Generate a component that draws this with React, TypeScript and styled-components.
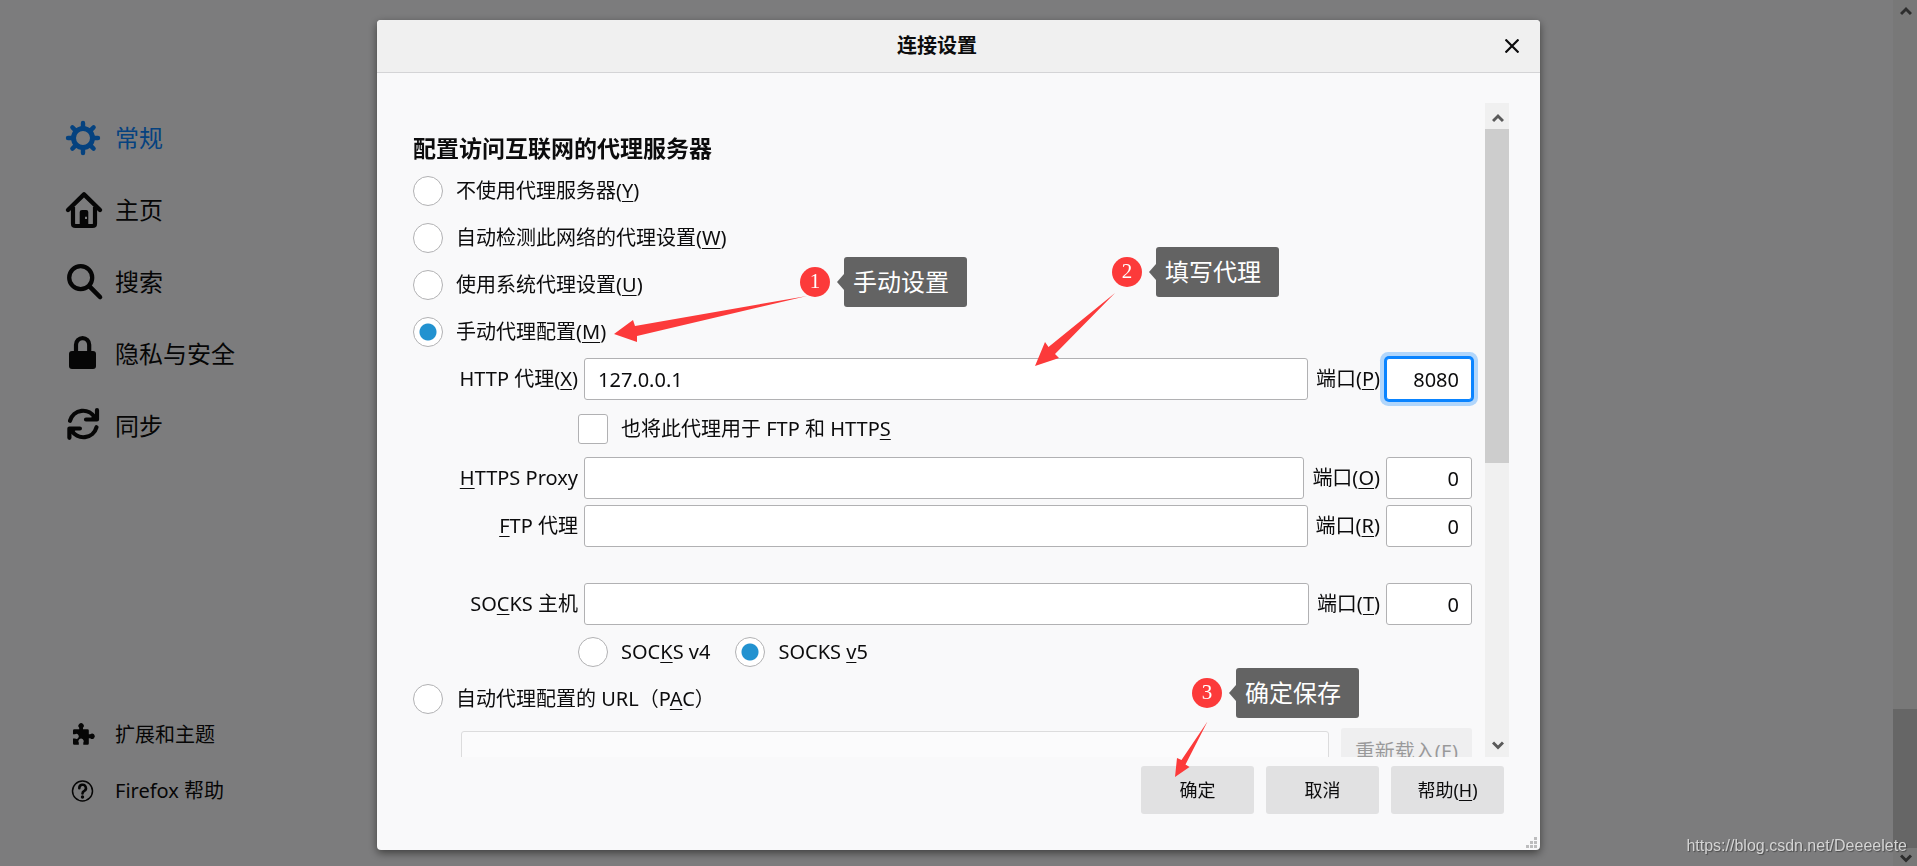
import React from "react";
import styled, { createGlobalStyle, css } from "styled-components";

const GlobalStyle = createGlobalStyle`
  *, *::before, *::after { box-sizing: border-box; }
  body {
    margin: 0;
    background: #f9f9fa;
    color: #0c0c0d;
    font: 20px/28px "Noto Sans", "Noto Sans CJK SC", sans-serif;
    overflow: hidden;
  }
  button, input { font: inherit; color: inherit; margin: 0; }
  u { text-underline-offset: 3px; text-decoration-thickness: 1px; text-decoration-skip-ink: none; }
`;

/* ---------- preferences page behind the dialog ---------- */

const Page = styled.div`
  display: flex;
  justify-content: space-between;
  height: 100vh;
`;

const Sidebar = styled.nav`
  display: flex;
  flex-direction: column;
  padding: 102px 0 47px 65px;
`;

const NavLink = styled.a<{ $active?: boolean; $small?: boolean }>`
  display: flex;
  align-items: center;
  gap: 14px;
  height: ${(p) => (p.$small ? 56 : 72)}px;
  font-size: ${(p) => (p.$small ? 20 : 24)}px;
  color: ${(p) => (p.$active ? "#0a84ff" : "#0c0c0d")};
  text-decoration: none;
  white-space: nowrap;
`;

const NavSpacer = styled.div`
  flex: 1;
`;

const IconBox = styled.span`
  display: flex;
  justify-content: center;
  width: 36px;

  svg {
    display: block;
    overflow: visible;
  }
`;

/* ---------- scroll bars ---------- */

const ScrollTrack = styled.div`
  display: flex;
  flex-direction: column;
  width: 24px;
  flex: none;
  background: #f0f0f0;
  color: #5a5a5a;
`;

const ScrollArrow = styled.button<{ $short?: boolean }>`
  display: flex;
  align-items: center;
  justify-content: center;
  height: ${(p) => (p.$short ? 18 : 26)}px;
  flex: none;
  padding: 4px 0 0 1px;
  border: 0;
  background: none;
`;

const ScrollGap = styled.div`
  flex: 1;
`;

const ScrollThumb = styled.div<{ $size: number }>`
  flex: 0 0 ${(p) => p.$size}%;
  background: #cdcdcd;
`;

/* ---------- dialog ---------- */

const Overlay = styled.div`
  position: fixed;
  inset: 0;
  display: flex;
  justify-content: center;
  padding: 20px 24px 16px;
  background: rgba(0, 0, 0, 0.5);
`;

const Dialog = styled.section`
  position: relative;
  display: flex;
  flex-direction: column;
  width: 100%;
  max-width: 1163px;
  border-radius: 4px;
  background: #f9f9fa;
  box-shadow: 0 3px 9px rgba(0, 0, 0, 0.5);
`;

const DialogHeader = styled.header`
  display: flex;
  align-items: center;
  height: 53px;
  flex: none;
  border-bottom: 1px solid #d4d4d6;
  border-radius: 4px 4px 0 0;
  background: #f0f0f0;
`;

const DialogTitle = styled.h1`
  flex: 1;
  margin: 0;
  font-size: 20px;
  line-height: 28px;
  text-align: center;
`;

const CloseButton = styled.button`
  display: flex;
  align-items: center;
  width: 43px;
  height: 30px;
  padding: 0 8px;
  border: 0;
  background: none;
`;

const DialogBody = styled.div`
  display: flex;
  flex: 1;
  min-height: 0;
  gap: 13px;
  padding: 30px 31px 0 36px;
`;

const ScrollArea = styled.form`
  flex: 1;
  min-width: 0;
  overflow: hidden;
  padding-top: 29px;
  /* room for the focus ring of the port field */
  margin-right: -8px;
  padding-right: 8px;
`;

const SectionTitle = styled.h2`
  margin: 0 0 12px;
  font-size: 23px;
  line-height: 32px;
`;

const ChoiceList = styled.div`
  display: flex;
  flex-direction: column;
  gap: 17px;
  margin-bottom: 11px;
`;

const Choice = styled.label`
  display: flex;
  align-items: center;
  gap: 13px;
  height: 30px;
  line-height: 30px;
  white-space: nowrap;
`;

const control = css`
  appearance: none;
  width: 30px;
  height: 30px;
  flex: none;
  border: 1px solid #b1b1b3;
  background: #fff;
`;

const Radio = styled.input.attrs({ type: "radio" })`
  ${control}
  border-radius: 50%;

  &:checked {
    background: radial-gradient(circle, #2292d0 0 8px, #fff 9px);
  }
`;

const Checkbox = styled.input.attrs({ type: "checkbox" })`
  ${control}
  border-radius: 3px;
`;

const IndentedChoices = styled.div<{ $after: number }>`
  display: flex;
  gap: 25px;
  padding-left: 165px;
  margin-bottom: ${(p) => p.$after}px;
`;

const ProxyRow = styled.div<{ $after: number }>`
  display: flex;
  align-items: center;
  margin-bottom: ${(p) => p.$after}px;
  padding-left: 37px;
`;

const FieldLabel = styled.label`
  width: 128px;
  flex: none;
  margin-right: 6px;
  text-align: right;
  white-space: nowrap;
`;

const PortLabel = styled.label`
  flex: none;
  margin: 0 6px 0 8px;
  white-space: nowrap;
`;

const TextField = styled.input`
  flex: 1;
  min-width: 0;
  height: 42px;
  padding: 0 13px;
  border: 1px solid #b1b1b3;
  border-radius: 3px;
  background: #fff;
  outline: 0;
`;

const PortField = styled(TextField)<{ $focused?: boolean }>`
  flex: 0 0 86px;
  padding: 0 12px;
  text-align: right;
  ${(p) =>
    p.$focused &&
    css`
      border-color: #0a84ff;
      box-shadow: 0 0 0 2px #0a84ff, 0 0 0 6px rgba(10, 132, 255, 0.3);
    `}
`;

const PacRow = styled.div`
  display: flex;
  align-items: center;
  gap: 12px;
  margin-top: 14px;
  padding-left: 48px;
  opacity: 0.4;
`;

const Button = styled.button<{ $wide?: boolean }>`
  min-width: 113px;
  height: 48px;
  padding: 0 ${(p) => (p.$wide ? 14 : 12)}px;
  border: 0;
  border-radius: 3px;
  background: #e1e1e2;
  white-space: nowrap;
`;

const DialogFooter = styled.footer`
  display: flex;
  flex: none;
  justify-content: flex-end;
  gap: 12px;
  padding: 9px 36px 36px;
  font-size: 18px;
`;

const Grip = styled.svg`
  position: absolute;
  right: 3px;
  bottom: 2px;
`;

/* ---------- tutorial marks drawn over the dialog ---------- */

const Arrows = styled.svg`
  position: absolute;
  top: 0;
  left: 0;
  overflow: visible;
  pointer-events: none;
`;

const Step = styled.div<{ $x: number; $y: number }>`
  position: absolute;
  left: ${(p) => p.$x}px;
  top: ${(p) => p.$y}px;
  display: flex;
  align-items: center;
  gap: 14px;
`;

const StepNumber = styled.span`
  width: 30px;
  height: 30px;
  border-radius: 50%;
  background: #fc3a3a;
  color: #fff;
  font: 21px/28px "Liberation Serif", serif;
  text-align: center;
`;

const StepText = styled.span`
  position: relative;
  width: 123px;
  height: 50px;
  padding-left: 9px;
  border-radius: 3px;
  background: #636363;
  color: #fff;
  font-size: 24px;
  line-height: 50px;
  white-space: nowrap;

  &::before {
    content: "";
    position: absolute;
    left: -7px;
    top: 17px;
    border: solid transparent;
    border-width: 8px 7px 8px 0;
    border-right-color: #636363;
  }
`;

const Watermark = styled.div`
  position: fixed;
  right: 10px;
  bottom: 8px;
  color: #d4d4d4;
  font: 16px/24px "Liberation Sans", sans-serif;
  text-shadow: 1px 1px 1px rgba(0, 0, 0, 0.4);
`;

/* ---------- icons ---------- */

const GearIcon = () => (
  <svg width="36" height="36" viewBox="0 0 36 36" fill="none" stroke="currentColor">
    <circle cx="18" cy="18" r="9.5" strokeWidth="5" />
    <path
      d="M18 8V3M18 28v5M8 18H3M28 18h5M10.9 10.9 7.4 7.4M25.1 25.1l3.5 3.5M10.9 25.1l-3.5 3.5M25.1 10.9l3.5-3.5"
      strokeWidth="4.4"
      strokeLinecap="round"
    />
  </svg>
);

const HomeIcon = () => (
  <svg width="36" height="36" viewBox="0 0 36 36" fill="none" stroke="currentColor">
    <path d="M3 18 19 2.4 35 18" strokeWidth="4.4" strokeLinecap="round" strokeLinejoin="round" />
    <path d="M8 15v16.5Q8 34 10.5 34h17q2.5 0 2.5-2.5V15" strokeWidth="4.2" />
    <path
      d="M17 18h4.3q2 0 2 2v13h-8.600V20q0-2 2.3-2zM20 24.7v2.2h2v-2.2z"
      fill="currentColor"
      fillRule="evenodd"
      stroke="none"
    />
  </svg>
);

const SearchIcon = () => (
  <svg width="36" height="36" viewBox="0 0 36 36" fill="none" stroke="currentColor" strokeLinecap="round">
    <circle cx="15.7" cy="13.7" r="11.5" strokeWidth="4.3" />
    <path d="M24.5 22.3 35 33" strokeWidth="4.6" />
  </svg>
);

const LockIcon = () => (
  <svg width="36" height="36" viewBox="0 0 36 36">
    <rect x="4" y="15" width="27" height="18" rx="3" fill="currentColor" />
    <path d="M11 17V8.7a6.6 6.6 0 0 1 13.2 0V17" fill="none" stroke="currentColor" strokeWidth="4.2" />
  </svg>
);

const SyncIcon = () => (
  <svg width="36" height="36" viewBox="0 0 36 36" fill="none" stroke="currentColor" strokeWidth="4.2" strokeLinecap="round">
    <path d="M5 12.8A13.5 13.5 0 0 1 30 10" />
    <path d="M32 2.2v9.3H21" strokeLinejoin="round" />
    <path d="M25 11 32 4v7z" fill="currentColor" stroke="none" />
    <path d="M31.5 19.2A13.5 13.5 0 0 1 6.5 22" />
    <path d="M4.4 29.8v-9.3h10.5" strokeLinejoin="round" />
    <path d="M11.5 21 4.4 28v-7z" fill="currentColor" stroke="none" />
  </svg>
);

const PuzzleIcon = () => (
  <svg width="24" height="24" viewBox="0 0 24 24" fill="currentColor">
    <path d="M3.3 6.2H8.2V4.8A2.7 2.7 0 1 1 12 4.8V6.2H16.5Q17.8 6.2 17.8 7.5V11.3H19.2A2.7 2.7 0 1 1 19.2 15.2H17.8V20.5Q17.8 21.8 16.5 21.8H12.3V19.8A2.7 2.7 0 1 0 7.8 19.8V21.8H3.3Q2 21.8 2 20.5V15.5H4A2.5 2.5 0 1 0 4 11.2H2V7.5Q2 6.2 3.3 6.2Z" />
  </svg>
);

const HelpIcon = () => (
  <svg width="24" height="24" viewBox="0 0 24 24" fill="none" stroke="currentColor">
    <circle cx="11.5" cy="12" r="10" strokeWidth="1.5" />
    <path d="M8.3 9.2a3.3 3.3 0 1 1 5 2.7q-1.8 1-1.8 2.5" strokeWidth="2.6" strokeLinecap="round" />
    <circle cx="11.5" cy="18" r="1.7" fill="currentColor" stroke="none" />
  </svg>
);

const Chevron = ({ down }: { down?: boolean }) => (
  <svg width="12" height="10" viewBox="0 0 12 10" fill="none" stroke="currentColor" strokeWidth="3">
    <path d={down ? "M1 1.5 6 6.5l5-5" : "M1 8 6 3l5 5"} />
  </svg>
);

/* ---------- data ---------- */

const sections = [
  { label: "常规", icon: <GearIcon />, active: true },
  { label: "主页", icon: <HomeIcon /> },
  { label: "搜索", icon: <SearchIcon /> },
  { label: "隐私与安全", icon: <LockIcon /> },
  { label: "同步", icon: <SyncIcon /> },
];

const links = [
  { label: "扩展和主题", icon: <PuzzleIcon /> },
  { label: "Firefox 帮助", icon: <HelpIcon /> },
];

const modes = [
  { text: "不使用代理服务器", hotkey: "Y" },
  { text: "自动检测此网络的代理设置", hotkey: "W" },
  { text: "使用系统代理设置", hotkey: "U" },
  { text: "手动代理配置", hotkey: "M", checked: true },
];

const steps = [
  { x: 423, y: 237, text: "手动设置" },
  { x: 735, y: 227, text: "填写代理" },
  { x: 815, y: 648, text: "确定保存" },
];

type ProxyProps = {
  id: string;
  label: React.ReactNode;
  hotkey: string;
  host?: string;
  port: string;
  focused?: boolean;
  after: number;
};

const Proxy = ({ id, label, hotkey, host = "", port, focused, after }: ProxyProps) => (
  <ProxyRow $after={after}>
    <FieldLabel htmlFor={id}>{label}</FieldLabel>
    <TextField id={id} type="text" defaultValue={host} />
    <PortLabel htmlFor={`${id}-port`}>
      端口(<u>{hotkey}</u>)
    </PortLabel>
    <PortField id={`${id}-port`} type="text" inputMode="numeric" defaultValue={port} $focused={focused} />
  </ProxyRow>
);

export default function App() {
  return (
    <>
      <GlobalStyle />
      <Page>
        <Sidebar>
          {sections.map((s) => (
            <NavLink key={s.label} href="#" $active={s.active}>
              <IconBox>{s.icon}</IconBox>
              {s.label}
            </NavLink>
          ))}
          <NavSpacer />
          {links.map((l) => (
            <NavLink key={l.label} href="#" $small>
              <IconBox>{l.icon}</IconBox>
              {l.label}
            </NavLink>
          ))}
        </Sidebar>
        <ScrollTrack>
          <ScrollArrow $short aria-label="向上滚动">
            <Chevron />
          </ScrollArrow>
          <ScrollGap />
          <ScrollThumb $size={16} />
          <ScrollArrow $short aria-label="向下滚动">
            <Chevron down />
          </ScrollArrow>
        </ScrollTrack>
      </Page>

      <Overlay>
        <Dialog role="dialog" aria-labelledby="dialog-title">
          <DialogHeader>
            <DialogTitle id="dialog-title">连接设置</DialogTitle>
            <CloseButton aria-label="关闭">
              <svg width="14" height="14" viewBox="0 0 14 14" stroke="currentColor" strokeWidth="2.2">
                <path d="M0.5 0.5l13 13M13.5 0.5l-13 13" />
              </svg>
            </CloseButton>
          </DialogHeader>

          <DialogBody>
            <ScrollArea>
              <SectionTitle>配置访问互联网的代理服务器</SectionTitle>
              <ChoiceList>
                {modes.map((m) => (
                  <Choice key={m.hotkey}>
                    <Radio name="mode" defaultChecked={m.checked} />
                    <span>
                      {m.text}(<u>{m.hotkey}</u>)
                    </span>
                  </Choice>
                ))}
              </ChoiceList>

              <Proxy
                id="http"
                label={<>HTTP 代理(<u>X</u>)</>}
                hotkey="P"
                host="127.0.0.1"
                port="8080"
                focused
                after={14}
              />
              <IndentedChoices $after={13}>
                <Choice>
                  <Checkbox />
                  <span>
                    也将此代理用于 FTP 和 HTTP<u>S</u>
                  </span>
                </Choice>
              </IndentedChoices>
              <Proxy id="https" label={<><u>H</u>TTPS Proxy</>} hotkey="O" port="0" after={6} />
              <Proxy id="ftp" label={<><u>F</u>TP 代理</>} hotkey="R" port="0" after={36} />
              <Proxy id="socks" label={<>SO<u>C</u>KS 主机</>} hotkey="T" port="0" after={12} />
              <IndentedChoices $after={17}>
                <Choice>
                  <Radio name="socks-version" />
                  <span>
                    SOC<u>K</u>S v4
                  </span>
                </Choice>
                <Choice>
                  <Radio name="socks-version" defaultChecked />
                  <span>
                    SOCKS <u>v</u>5
                  </span>
                </Choice>
              </IndentedChoices>

              <Choice>
                <Radio name="mode" />
                <span>
                  自动代理配置的 URL（P<u>A</u>C）
                </span>
              </Choice>
              <PacRow>
                <TextField type="text" aria-label="自动代理配置的 URL" disabled />
                <Button type="button" disabled $wide>
                  重新载入(<u>E</u>)
                </Button>
              </PacRow>
            </ScrollArea>

            <ScrollTrack>
              <ScrollArrow aria-label="向上滚动">
                <Chevron />
              </ScrollArrow>
              <ScrollThumb $size={51} />
              <ScrollGap />
              <ScrollArrow aria-label="向下滚动">
                <Chevron down />
              </ScrollArrow>
            </ScrollTrack>
          </DialogBody>

          <DialogFooter>
            <Button>确定</Button>
            <Button>取消</Button>
            <Button>
              帮助(<u>H</u>)
            </Button>
          </DialogFooter>

          <Grip width="11" height="11" viewBox="0 0 11 11" fill="#bdbdbe">
            <path d="M8 0h3v3H8zM4 4h3v3H4zM8 4h3v3H8zM0 8h3v3H0zM4 8h3v3H4zM8 8h3v3H8z" />
          </Grip>

          <Arrows width="1" height="1" fill="#fc3a3a">
            <path d="M430 276 258 306 256 300 237 314 260 322 260 316Z" />
            <path d="M738 273 671.5 327 668 322 658 346 682 338 678 334Z" />
            <path d="M830.5 701.5 804.5 740 800 738 798 757 812.5 747 808.5 744.5Z" />
          </Arrows>
          {steps.map((s, i) => (
            <Step key={s.text} $x={s.x} $y={s.y}>
              <StepNumber>{i + 1}</StepNumber>
              <StepText>{s.text}</StepText>
            </Step>
          ))}
        </Dialog>
      </Overlay>
      <Watermark>https://blog.csdn.net/Deeeelete</Watermark>
    </>
  );
}
